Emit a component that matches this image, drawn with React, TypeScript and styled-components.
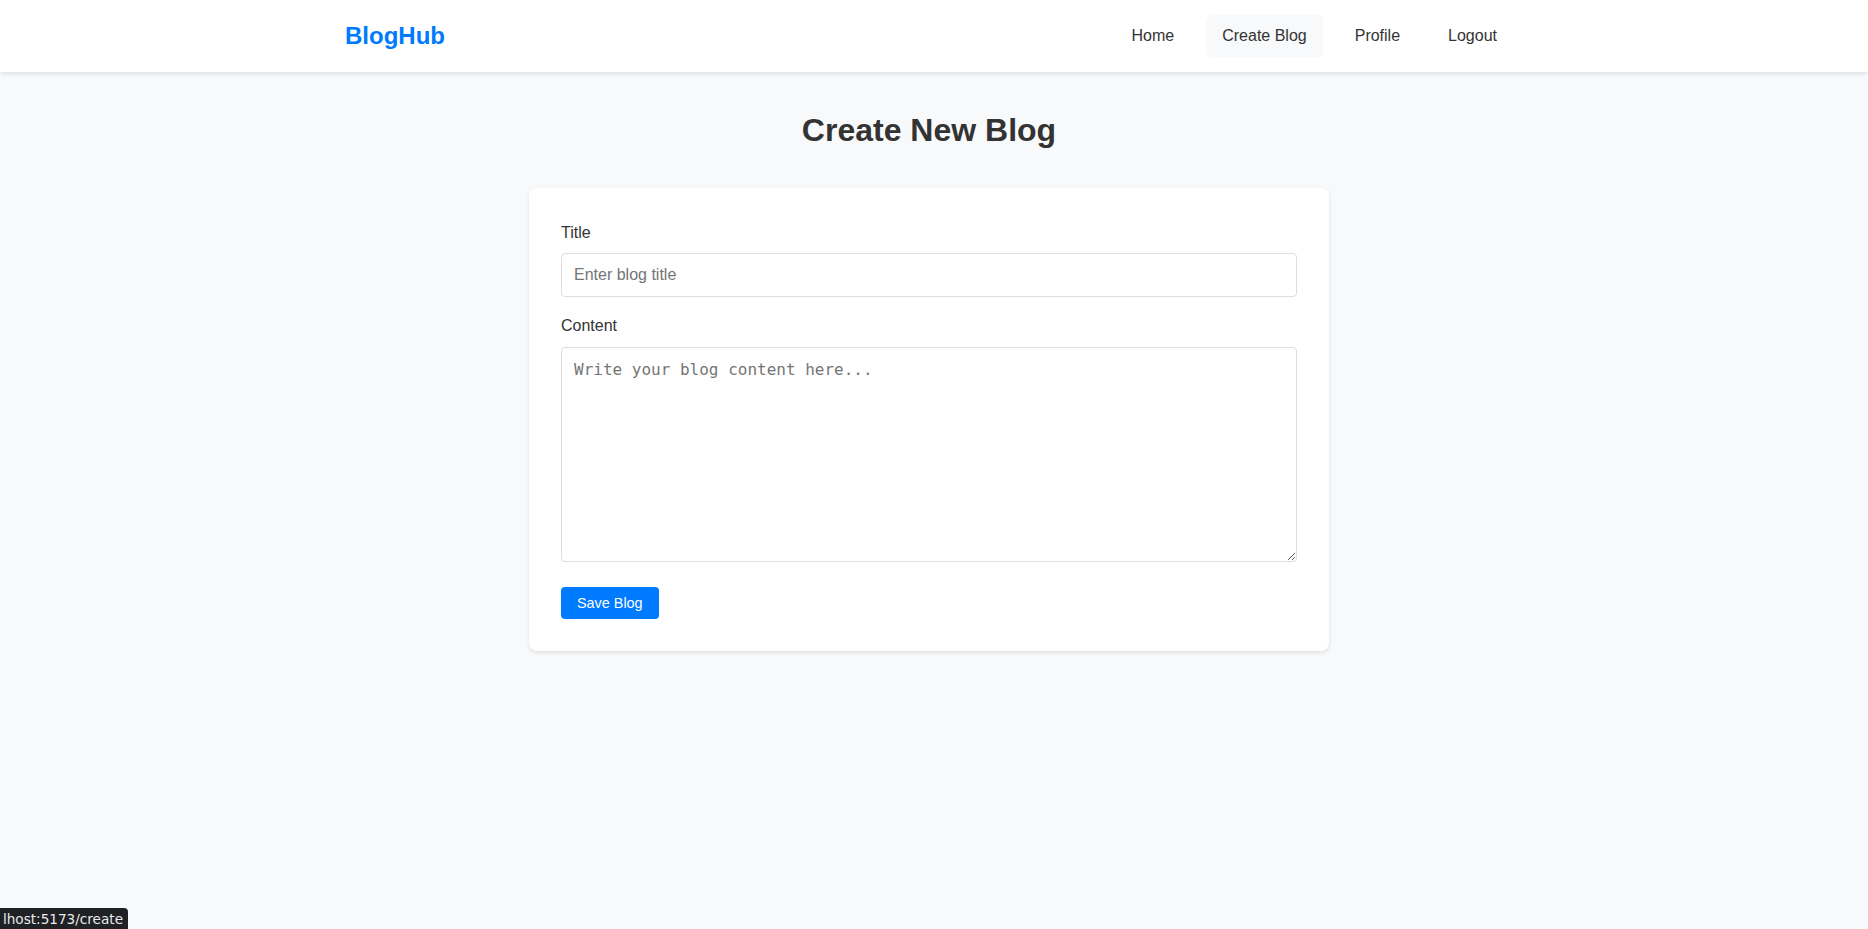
import styled, { createGlobalStyle } from 'styled-components';

const GlobalStyle = createGlobalStyle`
  * {
    box-sizing: border-box;
  }

  body {
    margin: 0;
    font-family: "Liberation Sans", Arial, sans-serif;
    line-height: 1.6;
    color: #333;
    background: #f8f9fa;
    min-height: 100vh;
  }
`;

const links = [
  { label: 'Home', active: false },
  { label: 'Create Blog', active: true },
  { label: 'Profile', active: false },
  { label: 'Logout', active: false },
];

const App = () => {
  return (
    <>
      <GlobalStyle />
      <Navbar>
        <NavInner>
          <Logo href="#">BlogHub</Logo>
          <NavLinks>
            {links.map((link) => (
              <NavLink key={link.label} href="#" $active={link.active}>
                {link.label}
              </NavLink>
            ))}
          </NavLinks>
        </NavInner>
      </Navbar>

      <Main>
        <Heading>Create New Blog</Heading>
        <Card>
          <FormGroup>
            <Label>Title</Label>
            <TextInput type="text" placeholder="Enter blog title" />
          </FormGroup>
          <FormGroup $last>
            <Label>Content</Label>
            <TextArea placeholder="Write your blog content here..." />
          </FormGroup>
          <Button>Save Blog</Button>
        </Card>
      </Main>

      <StatusBubble>lhost:5173/create</StatusBubble>
    </>
  );
};

const Navbar = styled.nav`
  background: #fff;
  box-shadow: 0 2px 4px rgba(0, 0, 0, 0.1);
  padding: 15px 10px 15px 0;
`;

const NavInner = styled.div`
  max-width: 1200px;
  margin: 0 auto;
  padding: 0 16px;
  display: flex;
  align-items: center;
  justify-content: space-between;
`;

const Logo = styled.a`
  font-size: 24px;
  font-weight: 700;
  color: #007bff;
  text-decoration: none;
`;

const NavLinks = styled.div`
  display: flex;
  gap: 16px;
`;

const NavLink = styled.a<{ $active?: boolean }>`
  font-size: 16px;
  color: #333;
  text-decoration: none;
  padding: 8px 16px;
  border-radius: 6px;
  background: ${({ $active }) => ($active ? '#f8f9fa' : 'transparent')};
`;

const Main = styled.main`
  padding: 33px 10px 40px 0;
`;

const Heading = styled.h1`
  margin: 0 0 32px;
  text-align: center;
  font-size: 32px;
  font-weight: 700;
  color: #333;
`;

const Card = styled.div`
  max-width: 800px;
  margin: 0 auto;
  background: #fff;
  border-radius: 8px;
  box-shadow: 0 2px 4px rgba(0, 0, 0, 0.1);
  padding: 32px;
`;

const FormGroup = styled.div<{ $last?: boolean }>`
  margin-bottom: ${({ $last }) => ($last ? '25px' : '16px')};
`;

const Label = styled.label`
  display: block;
  font-size: 16px;
  color: #333;
  margin-bottom: 8px;
`;

const TextInput = styled.input`
  display: block;
  width: 100%;
  height: 44px;
  padding: 0 12px;
  font-family: "Liberation Sans", Arial, sans-serif;
  font-size: 16px;
  color: #333;
  border: 1px solid #ddd;
  border-radius: 4px;
  outline: none;
`;

const TextArea = styled.textarea`
  display: block;
  width: 100%;
  height: 215px;
  padding: 12px;
  margin-top: 2px;
  font-family: "DejaVu Sans Mono", monospace;
  font-size: 16px;
  color: #333;
  border: 1px solid #ddd;
  border-radius: 4px;
  outline: none;
  resize: vertical;
`;

const Button = styled.button`
  display: block;
  background: #007bff;
  color: #fff;
  border: 0;
  border-radius: 4px;
  padding: 8px 16px;
  font-family: "Liberation Sans", Arial, sans-serif;
  font-size: 14.4px;
  cursor: pointer;
`;

const StatusBubble = styled.div`
  position: fixed;
  left: 0;
  bottom: 0;
  width: 128px;
  height: 21px;
  display: flex;
  justify-content: flex-end;
  align-items: center;
  background: #202124;
  color: #e8eaed;
  border-top-right-radius: 4px;
  padding: 2px 5px 0 0;
  font-family: "DejaVu Sans", sans-serif;
  font-size: 13.6px;
  line-height: 1;
  white-space: nowrap;
`;

export default App;
